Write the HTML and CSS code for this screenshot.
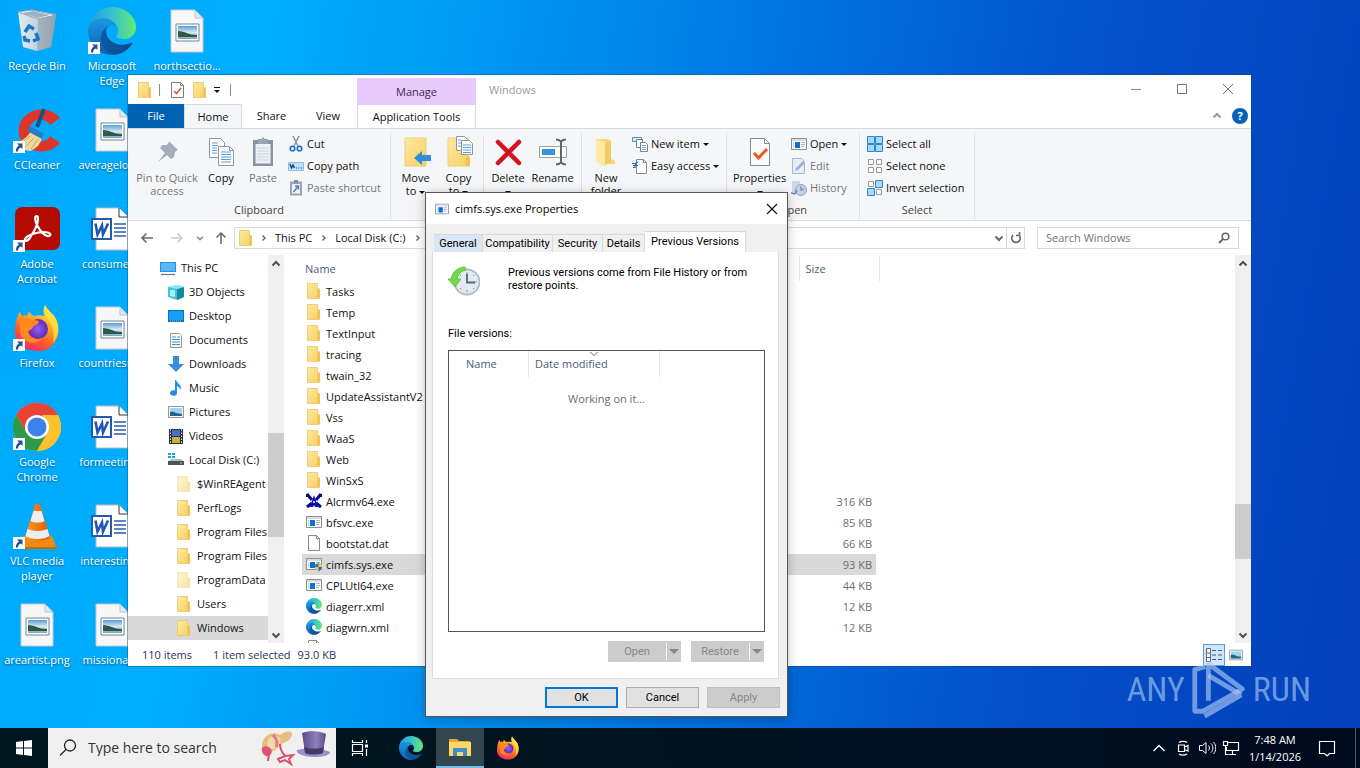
FILE: index.html
```html
<!DOCTYPE html>
<html lang="en">
<head>
<meta charset="utf-8">
<title>Windows</title>
<link rel="stylesheet" href="styles.css">
</head>
<body>
<svg class="defs" width="0" height="0" aria-hidden="true">
  <defs>
    <linearGradient id="gFolder" x1="0" x2="1" y1="0" y2="1"><stop offset="0" stop-color="#ffe9a0"/><stop offset="1" stop-color="#f8cf62"/></linearGradient>
    <linearGradient id="gEdgeA" x1="0" x2="1"><stop offset="0" stop-color="#0c59a4"/><stop offset="1" stop-color="#114a8b"/></linearGradient>
    <linearGradient id="gEdgeB" x1="0" x2="0" y1="0" y2="1"><stop offset="0" stop-color="#1b9de2"/><stop offset="1" stop-color="#0b5fb7"/></linearGradient>
    <linearGradient id="gEdgeC" x1="0" x2="1"><stop offset="0" stop-color="#1f9de0"/><stop offset=".5" stop-color="#35c1d0"/><stop offset="1" stop-color="#66eb6e"/></linearGradient>
    <linearGradient id="gFox" x1=".8" x2=".3" y1="0" y2="1"><stop offset="0" stop-color="#fff04a"/><stop offset=".4" stop-color="#ffa824"/><stop offset=".7" stop-color="#ff5a2c"/><stop offset="1" stop-color="#f02a6a"/></linearGradient>
    <radialGradient id="gFoxB"><stop offset="0" stop-color="#9a5cf0"/><stop offset="1" stop-color="#5a2bb8"/></radialGradient>
    <linearGradient id="gPhoto" x1="0" x2="0" y1="0" y2="1"><stop offset="0" stop-color="#5b9bd8"/><stop offset=".5" stop-color="#d9e8f2"/><stop offset="1" stop-color="#7da3b8"/></linearGradient>
    <linearGradient id="gBin" x1="0" x2="1"><stop offset="0" stop-color="#e4ebf0"/><stop offset=".5" stop-color="#c5d4de"/><stop offset="1" stop-color="#93a4b2"/></linearGradient>
    <linearGradient id="gHat" x1="0" x2="1"><stop offset="0" stop-color="#5a4b86"/><stop offset=".6" stop-color="#8f80bd"/><stop offset="1" stop-color="#5b4a86"/></linearGradient>
    <linearGradient id="gCone" x1="0" x2="1"><stop offset="0" stop-color="#ff9a20"/><stop offset="1" stop-color="#e05a00"/></linearGradient>
  </defs>
  <symbol id="folder" viewBox="0 0 16 16"><path d="M1.500.5h10v5l2 1v9h-12z" fill="url(#gFolder)" stroke="#e9c565" stroke-width=".8"/><path d="M11.500 6l2-1v9.500l-2 1z" fill="#f2bd48"/></symbol>
  <symbol id="folder-open" viewBox="0 0 32 32"><path d="M6 3h12l3 2v18l4 2v3H10l-4-4z" fill="#f8d675"/><path d="M6 3l9 3v25l-9-5z" fill="#ffe9a8"/><path d="M15 6l6-1v21l-6 3z" fill="#f4cb63"/></symbol>
  <symbol id="exe" viewBox="0 0 16 16"><path d="M.5 2.500h15v11H.5z" fill="#fff" stroke="#8b8f94"/><path d="M1 3h14v2H1z" fill="#d9dde2"/><path d="M4 6h5v6H4z" fill="#0f6fd0"/><path d="M10 6.500h4M10 8.500h4M10 10.500h3" stroke="#9fb6cb"/><path d="M2 6h1v6H2z" fill="#b9d6ef"/></symbol>
  <symbol id="shield-exe" viewBox="0 0 16 16"><use href="#exe"/><path d="M9 8.500l3.500-1.500L16 8.500c0 4-1 5.500-3.500 7C10 14 9 12.500 9 8.500z" fill="#2a72c8"/><path d="M12.500 7L16 8.500V11h-3.500zM12.500 11v4.500C10.500 14.500 9.500 13 9 11z" fill="#ffc43a"/></symbol>
  <symbol id="doc" viewBox="0 0 16 16"><path d="M2.500.5h8l3 3v12h-11z" fill="#fff" stroke="#8a8a8a"/><path d="M10.500.5v3h3" fill="none" stroke="#8a8a8a"/></symbol>
  <symbol id="doc-check" viewBox="0 0 16 16"><path d="M1.500.5h9l3 3v12h-12z" fill="#fff" stroke="#7d7d7d"/><path d="M10.500.5v3h3" fill="none" stroke="#7d7d7d"/><path d="M4 9l2.500 2.500L11 6" fill="none" stroke="#e2572b" stroke-width="1.600"/></symbol>
  <symbol id="prop" viewBox="0 0 32 32"><path d="M6.500 2.500h14l5 5v22h-19z" fill="#fbfbfb" stroke="#8a8a8a"/><path d="M20.500 2.500v5h5" fill="none" stroke="#8a8a8a"/><path d="M10 17l4.500 5L23 13" fill="none" stroke="#f05a1c" stroke-width="3"/></symbol>
  <symbol id="edge" viewBox="0 0 256 256"><g transform="translate(-4.600 -4.900)"><path fill="url(#gEdgeA)" d="M235.680 195.460a93.730 93.730 0 0 1-10.540 4.710 101.870 101.870 0 0 1-35.900 6.460c-47.320 0-88.540-32.550-88.540-74.320A31.480 31.480 0 0 1 117.130 105c-42.800 1.800-53.800 46.400-53.800 72.530 0 73.880 68.090 81.370 82.760 81.370 7.910 0 19.840-2.300 27-4.560l1.310-.44A128.340 128.340 0 0 0 241 201.100a4 4 0 0 0-5.320-5.640Z"/><path transform="translate(4.600 4.900)" fill="url(#gEdgeB)" d="M105.730 241.420A79.200 79.200 0 0 1 83 220.080a80.720 80.720 0 0 1 29.500-120.750c3.120-1.470 8.450-4.130 15.540-4a32.350 32.350 0 0 1 25.690 13 31.880 31.880 0 0 1 6.360 18.660c0-.21 24.460-79.600-80-79.600-43.900 0-80 41.660-80 78.210a130.150 130.150 0 0 0 12.110 56 128 128 0 0 0 156.380 67.110 75.550 75.550 0 0 1-62.780-8Z"/></g><path fill="url(#gEdgeC)" d="M152.330 148.860c-.81 1.050-3.300 2.500-3.300 5.660 0 2.610 1.700 5.120 4.720 7.230 14.380 10 41.490 8.680 41.560 8.680a59.560 59.560 0 0 0 30.270-8.350A61.380 61.380 0 0 0 256 109.100c.26-22.410-8-37.310-11.340-43.910C223.460 23.840 177.720 0 128 0A128 128 0 0 0 0 126.200c.48-36.540 36.800-66.050 80-66.050 3.500 0 23.460.34 42 10.070 16.340 8.580 24.900 18.940 30.850 29.210 6.180 10.670 7.280 24.150 7.280 29.520s-2.740 13.330-7.840 19.910Z"/></symbol>
  <symbol id="firefox" viewBox="0 0 48 48"><path d="M4 14c1-3 2-5 3-6l2 4c2-1 4-1 5 0l2-5c1 3 3 4 5 5 4-1 8-1 11 0-2-3-2-7 0-11 2 5 8 8 11 14 6 12 1 32-18 32C9 47 1 37 2 26c0-5 1-9 2-12z" fill="url(#gFox)"/><circle cx="25" cy="25" r="10" fill="url(#gFoxB)"/><path d="M8 13c6 0 8 2 11 3 3 0 6 0 7 2-1 3-5 3-6 5-1 3-4 3-5 5 1 6 8 9 14 6-6 9-21 5-22-7 0-5 0-9 1-14z" fill="#ff8a1e"/><path d="M32 1c2 5 8 8 11 14 4 9 2 18-3 24 2-9 0-17-5-23-4-5-5-10-3-15z" fill="#ffe23e" opacity=".8"/></symbol>
  <symbol id="chrome" viewBox="0 0 48 48"><circle cx="24" cy="24" r="24" fill="#fcc934"/><path d="M24 24L3.200 12A24 24 0 0 1 44.800 12z" fill="#ea4335"/><path d="M24 12h20.800A24 24 0 0 0 3.200 12L13.600 30z" fill="#ea4335"/><path d="M3.200 12A24 24 0 0 0 24 48l10.400-18L24 32 13.600 30z" fill="#2b9b4a"/><path d="M44.800 12A24 24 0 0 1 24 48l10.400-18L35 20l-6-8z" fill="#fcc22d"/><circle cx="24" cy="24" r="12" fill="#fff"/><circle cx="24" cy="24" r="9.500" fill="#3b82ec"/></symbol>
  <symbol id="acrobat" viewBox="0 0 48 48"><rect x="2" y="2" width="45" height="43" rx="7" fill="#b30b00"/><path d="M24 11c-3 0-2 5 0 9 3 6 8 12 12 11 3-1 1-4-5-4-7 0-17 3-19 7-1 3 3 3 6-3 4-6 7-13 7-17 0-2 0-3-1-3z" fill="none" stroke="#fff" stroke-width="2.200"/></symbol>
  <symbol id="vlc" viewBox="0 0 48 48"><path d="M10 34h29l5 13H4z" fill="#f08a12"/><path d="M4 45h40v2H4z" fill="#c96a04"/><path d="M22 3c1-2 4-2 5 0l10 32c-4 5-21 5-25 0z" fill="url(#gCone)"/><path d="M20.500 9h8l3 10c-4 2-10 2-14 0zM14.500 27c6 2.500 14 2.500 20 0l2 7c-5 4-19 4-24 0z" fill="#eceff1"/></symbol>
  <symbol id="ccleaner" viewBox="0 0 48 48"><path d="M47 12A23 21 0 1 0 47 37L37 30a11 11 0 1 1 0-11z" fill="#de3528"/><path d="M2 37c10-3 14-8 17-14l11 6c-2 8-5 13-13 16C9 44 6 41 2 37z" fill="#f3d79a"/><path d="M7 38l10-8M12 41l9-9M18 43l7-10" stroke="#cfa65f"/><path d="M17 20l14 8-2 5-15-8z" fill="#2b7cc4"/><path d="M24 21L31 3" stroke="#1b4f90" stroke-width="4"/></symbol>
  <symbol id="bin" viewBox="0 0 48 48"><path d="M5 5l14-2 24 4 0 2-5 31-14 4-14-4z" fill="url(#gBin)"/><path d="M5 5l14-2 24 5-18 4z" fill="#f4f8fb" stroke="#8ea3b2"/><path d="M9 6l11-2 17 4-12 3z" fill="#9db2bf"/><path d="M25 12l18-4-5 32-14 4z" fill="#8fa1ae" opacity=".6"/><g fill="none" stroke="#1976c8" stroke-width="3.500"><path d="M12 25l4-6 5 3M23 26l2 6-5 2M17 34l-5-1-1-4"/></g></symbol>
  <symbol id="png" viewBox="0 0 48 48"><path d="M8 3h24l8 8v34H8z" fill="#f7f7f7" stroke="#c5c9cc"/><path d="M32 3v8h8z" fill="#dceaf3" stroke="#b9c5cd"/><path d="M13 17h23v17H13z" fill="#fff" stroke="#6f8798"/><path d="M15 19h19v13H15z" fill="url(#gPhoto)"/><path d="M15 24c7 0 10 4 19 4v2H15z" fill="#2d5a48"/></symbol>
  <symbol id="word" viewBox="0 0 48 48"><path d="M8 3h23l9 9v33H8z" fill="#fff" stroke="#b8b8b8"/><path d="M31 3v9h9" fill="#fff" stroke="#333"/><path d="M26 19h12M26 23h12M26 27h12M26 31h12" stroke="#2b5dab" stroke-width="1.500"/><path d="M3 13h21v22H3z" fill="#2459b0"/><path d="M5 15h17v18H5z" fill="#fff"/><path d="M7.500 18.500l2 11 4.500-9 1 9 5-11" fill="none" stroke="#1f57b4" stroke-width="2.600"/></symbol>
  <symbol id="link" viewBox="0 0 12 12"><path d="M0 0h12v12H0z" fill="#fff"/><path d="M4 2.500h5.500V8L8 6.500C6 7 5 8.500 5 10.500H3C2.500 8 4 5.500 6 4.500z" fill="#254f8f"/></symbol>
  <symbol id="pin" viewBox="0 0 32 32"><path d="M18 5l9 9-2 1-1 1-1 5-3 2-4-4-9 7 7-9-5-5 2-3 5 0 2-3z" fill="#a3adba"/></symbol>
  <symbol id="copy" viewBox="0 0 32 32"><g fill="#fff" stroke="#8e979f"><path d="M4.500 2.500h11l4 4v15h-15z"/><path d="M13.500 10.500h11l4 4v15h-15z"/><path d="M24.500 10.500v4h4" fill="none"/></g><path d="M7 7h6M7 9.500h6M7 12h5M7 14.500h5M7 17h5M16 16h10M16 18.500h10M16 21h10M16 23.500h10M16 26h10" stroke="#5a9ce0"/></symbol>
  <symbol id="paste" viewBox="0 0 32 32"><path d="M6 4h20v26H6z" fill="#8893a3"/><path d="M8.500 8h15v19.500h-15z" fill="#eef1f5"/><path d="M11 3h3l2-2 2 2h3v5H11z" fill="#9aa5b4"/><path d="M10 12h12M10 15h12M10 18h12M10 21h12M10 24h12" stroke="#cdd4de"/></symbol>
  <symbol id="cut" viewBox="0 0 16 16"><path d="M5 0l5 10M11 0L6 10" stroke="#8796a5" stroke-width="1.500" fill="none"/><circle cx="4.500" cy="12.500" r="2.300" fill="none" stroke="#1b70bd" stroke-width="1.600"/><circle cx="11.500" cy="12.500" r="2.300" fill="none" stroke="#1b70bd" stroke-width="1.600"/></symbol>
  <symbol id="path" viewBox="0 0 16 16"><path d="M.5 4.500h15v8H.5z" fill="#bfe0fb" stroke="#8fbfe6"/><path d="M2 6l1.500 4L5 7l1.500 3" fill="none" stroke="#123a6b" stroke-width="1.300"/><path d="M8 10h1M10.500 10h1M13 10h1" stroke="#123a6b"/></symbol>
  <symbol id="pastelink" viewBox="0 0 16 16"><path d="M2 1.500h12v14H2z" fill="#98a6b9"/><path d="M4 4h8v9.500H4z" fill="#eef2f7"/><path d="M6 0h4v3H6z" fill="#7f8fa6"/><path d="M5.500 12l4-5M7 6h3.500v3.500" fill="none" stroke="#5b7fb8" stroke-width="1.500"/></symbol>
  <symbol id="move" viewBox="0 0 32 32"><path d="M5 2h21v28H5z" fill="url(#gFolder)" stroke="#efd078"/><path d="M14 22l8-7v4h9v6h-9v4z" fill="#2f8fdc"/></symbol>
  <symbol id="copyto" viewBox="0 0 32 32"><path d="M5 2h21v28H5z" fill="url(#gFolder)" stroke="#efd078"/><path d="M23 21h4v9h-4z" fill="#f0c254"/><g fill="#fff" stroke="#8e979f"><path d="M13.500.5h8l3 3v11h-11z"/><path d="M18.500 4.500h8l3 3v11h-11z"/></g><path d="M20 9h8M20 11.500h8M20 14h8M20 16.500h8M15 4h3M15 7h3M15 10h3" stroke="#5a9ce0"/></symbol>
  <symbol id="delete" viewBox="0 0 32 32"><path d="M6 6l21 21M27 6L6 27" stroke="#d31121" stroke-width="4.500" stroke-linecap="round"/></symbol>
  <symbol id="rename" viewBox="0 0 32 32"><path d="M2.500 10.500h27v11h-27z" fill="#fff" stroke="#9aa3ac"/><path d="M5 13h13v6H5z" fill="#3a93dd"/><path d="M19 3.500c3 0 4 1 5 2 1-1 2-2 5-2M19 28.500c3 0 4-1 5-2 1 1 2 2 5 2M24 5v22" fill="none" stroke="#616970" stroke-width="2"/></symbol>
  <symbol id="newitem" viewBox="0 0 16 16"><path d="M.5 1.500h9v4h-9z" fill="#d5ebfb" stroke="#5a93bd"/><path d="M4.500 3.500h6v8h-6z" fill="#fff" stroke="#77828c"/><path d="M8.500 6.500h5l2 2v7h-7z" fill="#fff" stroke="#77828c"/><path d="M10 9.500h4M10 11.500h4M10 13.500h4" stroke="#7ca8cf"/></symbol>
  <symbol id="easy" viewBox="0 0 16 16"><path d="M4.500 1.500h7l3 3v11h-10z" fill="#fff" stroke="#8a8a8a"/><path d="M11.500 1.500v3h3" fill="none" stroke="#8a8a8a"/><path d="M0 5.500h5M1 7.500h5M1 9.500h2M3 10c0-3 0-5 3-6" stroke="#1c6fc0" fill="none" stroke-width="1.200"/></symbol>
  <symbol id="edit" viewBox="0 0 16 16"><path d="M1.500.5h9l3 3v12h-12z" fill="#e9eef6" stroke="#a9b7cc"/><path d="M4 13l1-3 7-7 2 2-7 7z" fill="#9db2d2"/></symbol>
  <symbol id="history" viewBox="0 0 16 16"><path d="M1 1h8v12H1z" fill="#ccd8ea"/><circle cx="10" cy="10" r="5.500" fill="#c3d0e6" stroke="#8ea3c6"/><path d="M10 6.500V10l3-1M0 13l4 1 2-4" fill="none" stroke="#6f87b3" stroke-width="1.300"/></symbol>
  <symbol id="selall" viewBox="0 0 16 16"><path d="M.5.5h7v7h-7zM8.500.5h7v7h-7zM.5 8.500h7v7h-7zM8.500 8.500h7v7h-7z" fill="#a5daf9" stroke="#2a86d0"/></symbol>
  <symbol id="selnone" viewBox="0 0 16 16"><path d="M1.500 1.500h5v5h-5zM9.500 1.500h5v5h-5zM1.500 9.500h5v5h-5zM9.500 9.500h5v5h-5z" fill="#fff" stroke="#9a9a9a"/></symbol>
  <symbol id="selinv" viewBox="0 0 16 16"><path d="M1.500 1.500h5v5h-5zM9.500 9.500h5v5h-5z" fill="#fff" stroke="#9a9a9a"/><path d="M8.500.5h7v7h-7zM.5 8.500h7v7h-7z" fill="#a5daf9" stroke="#2a86d0"/></symbol>
  <symbol id="pc" viewBox="0 0 16 16"><path d="M0 2h16v10H0z" fill="#1e96e6"/><path d="M1 3h14v8H1z" fill="#57b8f5"/><path d="M1 14.500h14" stroke="#5f8297" stroke-width="1.200"/></symbol>
  <symbol id="cube" viewBox="0 0 16 16"><path d="M0 3l9-2 7 2v10l-7 3-9-3z" fill="#3cc7d6"/><path d="M9 5l7-2v10l-7 3z" fill="#16899d"/><path d="M0 3l9-2 7 2-7 2z" fill="#8be8ee"/><path d="M2 6h5v7l-5-1z" fill="#a8f0f3"/></symbol>
  <symbol id="desk" viewBox="0 0 16 16"><path d="M0 2h16v12H0z" fill="#0c6fc4"/><path d="M1 3h14v9H1z" fill="#16a0f8"/><path d="M2 13h12" stroke="#8bd0ff" stroke-dasharray="1 1"/></symbol>
  <symbol id="docs" viewBox="0 0 16 16"><path d="M2.500 1.500h9l2 2v12h-11z" fill="#fff" stroke="#8d9aa5"/><path d="M4 5h4M4 7.500h8M4 10h8M4 12.500h8M9 5h3" stroke="#3f8fd0" stroke-width="1.200"/></symbol>
  <symbol id="down" viewBox="0 0 16 16"><path d="M5 0h6v8h5l-8 8-8-8h5z" fill="#3b8fda"/></symbol>
  <symbol id="music" viewBox="0 0 16 16"><path d="M8 0c1 4 7 5 4 10-.5-3-2-4-3-4v7a3.500 2.800 0 1 1-2-2.500V0z" fill="#1e90e8"/></symbol>
  <symbol id="pics" viewBox="0 0 16 16"><path d="M.5 2.500h15v11H.5z" fill="#fff" stroke="#8a99a5"/><path d="M2 4h12v8H2z" fill="#9fd2f5"/><path d="M2 8c4-1 6 2 12 2v2H2z" fill="#2a5f86"/></symbol>
  <symbol id="video" viewBox="0 0 16 16"><path d="M1 1h14v15H1z" fill="#2b2f3a"/><path d="M4 2h8v6H4z" fill="#456fd0"/><path d="M4 9h8v6H4z" fill="#cbb042"/><path d="M2.500 1.500v14M13.500 1.500v14" stroke="#dfe3ea" stroke-dasharray="1.500 1.500"/></symbol>
  <symbol id="disk" viewBox="0 0 16 16"><path d="M1 9l2-2h10l2 2z" fill="#b4babf"/><path d="M0 9h16v4H0z" fill="#4b5359"/><path d="M12 11h2" stroke="#7cf08a"/><path d="M0 1h3v2H0zM4 1h3v2H4zM0 4h3v2H0zM4 4h3v2H4z" fill="#12a5e8"/></symbol>
  <symbol id="alc" viewBox="0 0 16 16"><path d="M1 1l5 6M15 1l-5 6M1 14l5-4M15 14l-5-4M1 1v3M15 1v3" stroke="#0a0a8c" stroke-width="3"/><path d="M8 2l4 12H9l-1-2-1 2H4z" fill="#0a0ac0"/><circle cx="8" cy="9" r="1" fill="#fff"/></symbol>
  <symbol id="chev-up" viewBox="0 0 10 10"><path d="M1.500 6.500L5 3l3.500 3.500" fill="none" stroke="currentColor" stroke-width="2"/></symbol>
  <symbol id="chev-down" viewBox="0 0 10 10"><path d="M1.500 3.500L5 7l3.500-3.500" fill="none" stroke="currentColor" stroke-width="2"/></symbol>
  <symbol id="chev-right" viewBox="0 0 10 10"><path d="M3.500 2.500L6 5 3.500 7.500" fill="none" stroke="currentColor" stroke-width="1.400"/></symbol>
  <symbol id="loupe" viewBox="0 0 12 12"><circle cx="7.500" cy="4.500" r="3.300" fill="none" stroke="currentColor" stroke-width="1.500"/><path d="M5 7L1 11" stroke="currentColor" stroke-width="2"/></symbol>
</svg>

<main class="desktop">
  <div class="icons">
    <a class="shortcut" href="#"><span class="pic"><svg class="i48"><use href="#bin"/></svg></span>Recycle Bin</a>
    <a class="shortcut" href="#"><span class="pic"><svg class="i48"><use href="#ccleaner"/></svg><svg class="badge"><use href="#link"/></svg></span>CCleaner</a>
    <a class="shortcut" href="#"><span class="pic"><svg class="i48"><use href="#acrobat"/></svg><svg class="badge"><use href="#link"/></svg></span>Adobe<br>Acrobat</a>
    <a class="shortcut" href="#"><span class="pic"><svg class="i48"><use href="#firefox"/></svg><svg class="badge"><use href="#link"/></svg></span>Firefox</a>
    <a class="shortcut" href="#"><span class="pic"><svg class="i48"><use href="#chrome"/></svg><svg class="badge"><use href="#link"/></svg></span>Google<br>Chrome</a>
    <a class="shortcut" href="#"><span class="pic"><svg class="i48"><use href="#vlc"/></svg><svg class="badge"><use href="#link"/></svg></span>VLC media<br>player</a>
    <a class="shortcut" href="#"><span class="pic"><svg class="i48"><use href="#png"/></svg></span>areartist.png</a>
    <a class="shortcut" href="#"><span class="pic"><svg class="i48"><use href="#edge"/></svg><svg class="badge"><use href="#link"/></svg></span>Microsoft<br>Edge</a>
    <a class="shortcut" href="#"><span class="pic"><svg class="i48"><use href="#png"/></svg></span>averagelow...</a>
    <a class="shortcut" href="#"><span class="pic"><svg class="i48"><use href="#word"/></svg></span>consumer...</a>
    <a class="shortcut" href="#"><span class="pic"><svg class="i48"><use href="#png"/></svg></span>countriesm...</a>
    <a class="shortcut" href="#"><span class="pic"><svg class="i48"><use href="#word"/></svg></span>formeeting...</a>
    <a class="shortcut" href="#"><span class="pic"><svg class="i48"><use href="#word"/></svg></span>interesting...</a>
    <a class="shortcut" href="#"><span class="pic"><svg class="i48"><use href="#png"/></svg></span>missionar...</a>
    <a class="shortcut" href="#"><span class="pic"><svg class="i48"><use href="#png"/></svg></span>northsectio...</a>
  </div>

  <section class="explorer" aria-label="Windows">
    <header class="head">
      <div class="head-left">
        <div class="quick">
          <svg class="i16"><use href="#folder"/></svg><i class="bar"></i>
          <button class="first" aria-label="Properties"><svg class="i16"><use href="#doc-check"/></svg></button>
          <button aria-label="New folder"><svg class="i16"><use href="#folder"/></svg></button>
          <button class="qat-more" aria-label="Customize"><i class="caret"></i></button><i class="bar"></i>
        </div>
        <div class="tabs">
          <button class="tab file">File</button><button class="tab home">Home</button><button class="tab share">Share</button><button class="tab view">View</button>
        </div>
      </div>
      <div class="manage"><span>Manage</span><button>Application Tools</button></div>
      <h1>Windows</h1>
      <div class="head-right">
        <div class="winctl">
          <button aria-label="Minimize"><svg class="i12" viewBox="0 0 12 12"><path d="M1 6.500h10" stroke="#888"/></svg></button>
          <button aria-label="Maximize"><svg class="i12" viewBox="0 0 12 12"><path d="M1.500 1.500h9v9h-9z" fill="none" stroke="#777"/></svg></button>
          <button aria-label="Close"><svg class="i12" viewBox="0 0 12 12"><path d="M1 1l10 10M11 1L1 11" stroke="#777"/></svg></button>
        </div>
        <div class="help">
          <button aria-label="Collapse ribbon"><svg class="i10"><use href="#chev-up"/></svg></button>
          <button class="q" aria-label="Help">?</button>
        </div>
      </div>
    </header>

    <div class="ribbon">
      <div class="group clip">
        <div class="items">
          <button class="big pinb off"><svg class="i32"><use href="#pin"/></svg>Pin to Quick<br>access</button>
          <button class="big copyb"><svg class="i32"><use href="#copy"/></svg>Copy</button>
          <button class="big pasteb off"><svg class="i32"><use href="#paste"/></svg>Paste</button>
          <div class="smalls">
            <button><svg class="i16"><use href="#cut"/></svg>Cut</button>
            <button><svg class="i16"><use href="#path"/></svg>Copy path</button>
            <button class="off"><svg class="i16"><use href="#pastelink"/></svg>Paste shortcut</button>
          </div>
        </div>
        <div class="gname">Clipboard</div>
      </div>
      <div class="group org">
        <div class="items">
          <button class="big moveb"><svg class="i32"><use href="#move"/></svg>Move<br>to <i class="caret"></i></button>
          <button class="big moveb"><svg class="i32"><use href="#copyto"/></svg>Copy<br>to <i class="caret"></i></button>
          <i class="vline"></i>
          <button class="big delb"><svg class="i32"><use href="#delete"/></svg>Delete<br><i class="caret"></i></button>
          <button class="big renb"><svg class="i32"><use href="#rename"/></svg>Rename</button>
        </div>
        <div class="gname">Organize</div>
      </div>
      <div class="group new">
        <div class="items">
          <button class="big newb"><svg class="i32"><use href="#folder-open"/></svg>New<br>folder</button>
          <div class="smalls">
            <button><svg class="i16"><use href="#newitem"/></svg>New item <i class="caret"></i></button>
            <button><svg class="i16"><use href="#easy"/></svg>Easy access <i class="caret"></i></button>
          </div>
        </div>
        <div class="gname">New</div>
      </div>
      <div class="group open">
        <div class="items">
          <button class="big propb"><svg class="i32"><use href="#prop"/></svg>Properties<br><i class="caret"></i></button>
          <div class="smalls">
            <button><svg class="i16"><use href="#exe"/></svg>Open <i class="caret"></i></button>
            <button class="off"><svg class="i16"><use href="#edit"/></svg>Edit</button>
            <button class="off"><svg class="i16"><use href="#history"/></svg>History</button>
          </div>
        </div>
        <div class="gname">Open</div>
      </div>
      <div class="group sel">
        <div class="items">
          <div class="smalls">
            <button><svg class="i16"><use href="#selall"/></svg>Select all</button>
            <button><svg class="i16"><use href="#selnone"/></svg>Select none</button>
            <button><svg class="i16"><use href="#selinv"/></svg>Invert selection</button>
          </div>
        </div>
        <div class="gname">Select</div>
      </div>
    </div>

    <div class="addressrow">
      <div class="arrows">
        <button aria-label="Back"><svg class="i14" viewBox="0 0 14 14"><path d="M13 7H2M6.500 2.500L2 7l4.500 4.500" fill="none" stroke="#666" stroke-width="1.500"/></svg></button>
        <button aria-label="Forward"><svg class="i14" viewBox="0 0 14 14"><path d="M1 7h11M7.500 2.500L12 7l-4.500 4.500" fill="none" stroke="#ccc" stroke-width="1.500"/></svg></button>
        <button class="recent" aria-label="Recent"><svg class="i8"><use href="#chev-down"/></svg></button>
        <button class="up" aria-label="Up"><svg class="i14" viewBox="0 0 14 14"><path d="M7 13V2M2.500 6.500L7 2l4.500 4.500" fill="none" stroke="#666" stroke-width="1.500"/></svg></button>
      </div>
      <nav class="address" aria-label="Address">
        <svg class="i16"><use href="#folder"/></svg>
        <svg class="i10"><use href="#chev-right"/></svg><a href="#">This PC</a>
        <svg class="i10"><use href="#chev-right"/></svg><a href="#">Local Disk (C:)</a>
        <svg class="i10"><use href="#chev-right"/></svg>
        <span class="grow"></span>
        <button class="prev" aria-label="Previous locations"><svg class="i10"><use href="#chev-down"/></svg></button>
        <button class="refresh" aria-label="Refresh"><svg class="i12" viewBox="0 0 12 12"><path d="M3 3a4.300 4.300 0 1 0 6 0M9.500 0v3.500H6" fill="none" stroke="#666" stroke-width="1.600"/></svg></button>
      </nav>
      <div class="search"><input type="search" aria-label="Search Windows" placeholder="Search Windows"><svg class="i12"><use href="#loupe"/></svg></div>
    </div>

    <div class="panes">
      <nav class="tree" aria-label="Folders">
        <a href="#"><svg class="i16"><use href="#pc"/></svg>This PC</a>
        <a href="#" class="l1"><svg class="i16"><use href="#cube"/></svg>3D Objects</a>
        <a href="#" class="l1"><svg class="i16"><use href="#desk"/></svg>Desktop</a>
        <a href="#" class="l1"><svg class="i16"><use href="#docs"/></svg>Documents</a>
        <a href="#" class="l1"><svg class="i16"><use href="#down"/></svg>Downloads</a>
        <a href="#" class="l1"><svg class="i16"><use href="#music"/></svg>Music</a>
        <a href="#" class="l1"><svg class="i16"><use href="#pics"/></svg>Pictures</a>
        <a href="#" class="l1"><svg class="i16"><use href="#video"/></svg>Videos</a>
        <a href="#" class="l1"><svg class="i16"><use href="#disk"/></svg>Local Disk (C:)</a>
        <a href="#" class="l2 hid"><svg class="i16"><use href="#folder"/></svg>$WinREAgent</a>
        <a href="#" class="l2"><svg class="i16"><use href="#folder"/></svg>PerfLogs</a>
        <a href="#" class="l2"><svg class="i16"><use href="#folder"/></svg>Program Files</a>
        <a href="#" class="l2"><svg class="i16"><use href="#folder"/></svg>Program Files</a>
        <a href="#" class="l2 hid"><svg class="i16"><use href="#folder"/></svg>ProgramData</a>
        <a href="#" class="l2"><svg class="i16"><use href="#folder"/></svg>Users</a>
        <a href="#" class="l2 cur"><svg class="i16"><use href="#folder"/></svg>Windows</a>
      </nav>
      <div class="scroll nav-scroll"><button aria-label="Scroll up"><svg class="i10"><use href="#chev-up"/></svg></button><i class="before"></i><i class="thumb"></i><i class="after"></i><button aria-label="Scroll down"><svg class="i10"><use href="#chev-down"/></svg></button></div>
      <div class="files">
        <table>
          <thead><tr><th>Name</th><th class="size">Size</th></tr></thead>
          <tbody>
            <tr><td><svg class="i16"><use href="#folder"/></svg>Tasks</td><td></td></tr>
            <tr><td><svg class="i16"><use href="#folder"/></svg>Temp</td><td></td></tr>
            <tr><td><svg class="i16"><use href="#folder"/></svg>TextInput</td><td></td></tr>
            <tr><td><svg class="i16"><use href="#folder"/></svg>tracing</td><td></td></tr>
            <tr><td><svg class="i16"><use href="#folder"/></svg>twain_32</td><td></td></tr>
            <tr><td><svg class="i16"><use href="#folder"/></svg>UpdateAssistantV2</td><td></td></tr>
            <tr><td><svg class="i16"><use href="#folder"/></svg>Vss</td><td></td></tr>
            <tr><td><svg class="i16"><use href="#folder"/></svg>WaaS</td><td></td></tr>
            <tr><td><svg class="i16"><use href="#folder"/></svg>Web</td><td></td></tr>
            <tr><td><svg class="i16"><use href="#folder"/></svg>WinSxS</td><td></td></tr>
            <tr><td><svg class="i16"><use href="#alc"/></svg>Alcrmv64.exe</td><td>316 KB</td></tr>
            <tr><td><svg class="i16"><use href="#exe"/></svg>bfsvc.exe</td><td>85 KB</td></tr>
            <tr><td><svg class="i16"><use href="#doc"/></svg>bootstat.dat</td><td>66 KB</td></tr>
            <tr class="cur"><td><svg class="i16"><use href="#shield-exe"/></svg>cimfs.sys.exe</td><td>93 KB</td></tr>
            <tr><td><svg class="i16"><use href="#exe"/></svg>CPLUtl64.exe</td><td>44 KB</td></tr>
            <tr><td><svg class="i16"><use href="#edge"/></svg>diagerr.xml</td><td>12 KB</td></tr>
            <tr><td><svg class="i16"><use href="#edge"/></svg>diagwrn.xml</td><td>12 KB</td></tr>
            <tr><td><svg class="i16"><use href="#doc"/></svg></td><td></td></tr>
          </tbody>
        </table>
      </div>
      <div class="scroll file-scroll"><button aria-label="Scroll up"><svg class="i10"><use href="#chev-up"/></svg></button><i class="before"></i><i class="thumb"></i><i class="after"></i><button aria-label="Scroll down"><svg class="i10"><use href="#chev-down"/></svg></button></div>
    </div>

    <footer class="status">
      <span class="count">110 items</span><span>1 item selected</span><span class="kb">93.0 KB</span><span class="grow"></span>
      <button class="mode on" aria-label="Details view"><svg class="i16" viewBox="0 0 16 16"><path d="M.5 1.500h4v13h-4zM.5 6h4M.5 10.500h4" fill="#fff" stroke="#667"/><path d="M6 3.500h4M6 8h4M6 12.500h4M12 3.500h4M12 8h4M12 12.500h4" stroke="#557"/></svg></button>
      <button class="mode" aria-label="Large icons"><svg class="i14"><use href="#pics"/></svg></button>
    </footer>
  </section>

  <section class="dialog" role="dialog" aria-label="cimfs.sys.exe Properties">
    <header><svg class="i14"><use href="#exe"/></svg><h2>cimfs.sys.exe Properties</h2><button aria-label="Close"><svg class="i12" viewBox="0 0 12 12"><path d="M1 1l10 10M11 1L1 11" stroke="#111" stroke-width="1.200"/></svg></button></header>
    <div class="ptabs" role="tablist">
      <button role="tab" class="hot t-gen">General</button><button role="tab" class="t-com">Compatibility</button><button role="tab" class="t-sec">Security</button><button role="tab" class="t-det">Details</button><button role="tab" class="active">Previous Versions</button>
    </div>
    <div class="page">
      <div class="intro">
        <svg class="clock" viewBox="0 0 32 32"><circle cx="19" cy="16" r="12.500" fill="#e3ebf1" stroke="#b4bec5" stroke-width="2"/><path d="M19 6v2M19 24v2M9 16h2M27 16h2M12 9l1 1M26 9l-1 1M12 23l1-1M26 23l-1-1" stroke="#7f8d98"/><path d="M19 8v8.500h8" fill="none" stroke="#51677a" stroke-width="1.800"/><path d="M17 1C10 1 4 6 3 13H0l7 8 6-8H9c1-5 4-8 9-9z" fill="#6fd94b" stroke="#4fb934" stroke-width=".7"/></svg>
        <p>Previous versions come from File History or from<br>restore points.</p>
      </div>
      <div class="flabel">File versions:</div>
      <div class="versions">
        <div class="vhead"><span class="c1">Name</span><span class="c2">Date modified<svg class="sort" viewBox="0 0 8 4"><path d="M0 0l4 3.500L8 0" fill="none" stroke="#777"/></svg></span></div>
        <p>Working on it...</p>
      </div>
      <div class="vactions">
        <button class="split" disabled><span>Open</span><i class="caret"></i></button>
        <button class="split" disabled><span>Restore</span><i class="caret"></i></button>
      </div>
    </div>
    <footer><button class="ok">OK</button><button>Cancel</button><button disabled>Apply</button></footer>
  </section>

  <div class="watermark"><span>ANY</span>
    <svg viewBox="0 0 56 64"><g fill="none" stroke="currentColor" stroke-width="5" stroke-linejoin="round"><path d="M14 9L3 12v43l8 0 41-23L17 6v38"/><path d="M17 18l34 20M13 60l38-22"/></g></svg>
    <span>RUN</span></div>
</main>

<footer class="taskbar">
  <button class="start" aria-label="Start"><svg class="i16" viewBox="0 0 16 16"><path d="M0 2l7-1v6.500H0zM8 1l8-1v7.500H8zM0 8.500h7V15l-7-1zM8 8.500h8V16l-8-1z" fill="#fff"/></svg></button>
  <div class="tsearch">
    <svg class="i18" viewBox="0 0 18 18"><circle cx="11" cy="6.500" r="5.500" fill="none" stroke="#222" stroke-width="1.300"/><path d="M7 10.500L1 16.500" stroke="#222" stroke-width="1.300"/></svg>
    <input type="text" aria-label="Type here to search" placeholder="Type here to search">
    <svg class="hats" viewBox="0 0 72 36"><path d="M2 17C1 7 12 0 20 5c4-4 13-5 12 0-1 6-8 7-12 10-3 4-7 7-12 8-4-1-6-3-6-6z" fill="#e8bd80"/><path d="M7 14C8 6 16 4 20 8c2 6-4 12-11 12z" fill="#f6d9a4"/><path d="M13 5c4 4 5 8 3 12" fill="none" stroke="#e2798a" stroke-width="3"/><path d="M2 18c3-3 7-2 9 1s0 6-3 7-7-3-6-8z" fill="#dd5570"/><path d="M9 24l-1 7M20 14c0 6 2 9 6 13M18 29l7-3 8-1-4 4 2 5-6-4-5 2z" fill="none" stroke="#d8506c" stroke-width="2"/><path d="M37 20c6-2 26-2 33 2 1 3-8 5-16 5s-19-3-17-7z" fill="#9a90cc"/><path d="M42 3c6-3 20-2 24 1l-3 18c-4 2-15 2-18 0z" fill="url(#gHat)"/><path d="M44 17c5 2 15 2 20 0l-1 6c-4 2-15 2-18 0z" fill="#443a66"/></svg>
  </div>
  <button class="app" aria-label="Task View"><svg class="i18" viewBox="0 0 18 18"><path d="M1.500 1v2.500h10V1M1.500 17v-2.500h10V17M1.500 5.500h10v7h-10zM15.500 1v3M15.500 10v7" fill="none" stroke="#fff" stroke-width="1.200"/><path d="M14 5.500h3v3h-3z" fill="#fff"/></svg></button>
  <button class="app wide" aria-label="Edge"><svg class="i24"><use href="#edge"/></svg></button>
  <button class="app active" aria-label="File Explorer"><svg class="i24" viewBox="0 0 24 24"><path d="M1 4h8l2 2h11v6H1z" fill="#e8a33d"/><path d="M1 7h22v14H1z" fill="#ffd766"/><path d="M5 21v-8h14v8h-4v-4H9v4z" fill="#3d8fc6"/></svg></button>
  <button class="app" aria-label="Firefox"><svg class="i24"><use href="#firefox"/></svg></button>
  <span class="grow"></span>
  <div class="tray">
    <button aria-label="Hidden icons"><svg class="i14" viewBox="0 0 14 14"><path d="M1.500 10L7 4.500l5.500 5.500" fill="none" stroke="#fff" stroke-width="1.400"/></svg></button>
    <button aria-label="Meet Now"><svg class="i16" viewBox="0 0 16 16"><path d="M3.500 5h6v6.500h-6zM9.500 7l3.500-1.500v5.500l-3.500-1.500M4 2.500c2-1.500 6-1.500 8 0M4 14c2 1.500 6 1.500 8 0" fill="none" stroke="#fff" stroke-width="1.200"/></svg></button>
    <button aria-label="Volume"><svg class="i18" viewBox="0 0 18 18"><path d="M1.500 6.500h3L8 3.500v11L4.500 11.500h-3zM10.500 6.500c1.300 1.500 1.300 3.500 0 5M13 4.500c2.500 2.500 2.500 6.500 0 9M15.500 3c3 3.500 3 8.500 0 12" fill="none" stroke="#fff"/></svg></button>
    <button aria-label="Network"><svg class="i18" viewBox="0 0 18 18"><path d="M6 3.500h10.500v8H4.500V8M10.500 12v3M7 15.500h7M1.500 2.500h4v4h-4zM3.500 6.500v9h3" fill="none" stroke="#fff" stroke-width="1.200"/></svg></button>
  </div>
  <button class="time">7:48 AM<br>1/14/2026</button>
  <button class="notify" aria-label="Notifications"><svg class="i18" viewBox="0 0 18 18"><path d="M1.500 2.500h15v12h-5L9 17l-2.500-2.500h-5z" fill="none" stroke="#fff" stroke-width="1.200"/></svg></button>
  <button class="peek" aria-label="Show desktop"></button>
</footer>
</body>
</html>
```
FILE: styles.css
```css
* { box-sizing: border-box; }
html, body { height: 100%; }
body {
  margin: 0;
  display: flex;
  flex-direction: column;
  overflow: hidden;
  font: 11px/16px "Open Sans", "Noto Sans", sans-serif;
  color: #111;
}
button {
  font: inherit;
  color: inherit;
  background: none;
  border: 0;
  padding: 0;
  margin: 0;
  display: flex;
  align-items: center;
  justify-content: center;
  white-space: nowrap;
}
a { color: inherit; text-decoration: none; }
h1, h2, p { margin: 0; font-size: inherit; font-weight: normal; }
svg { flex: none; display: block; }
input { font: inherit; border: 0; background: none; outline: 0; padding: 0; min-width: 0; }
.defs { position: absolute; }
.grow { flex: 1; }
.i8 { width: 8px; height: 8px; }
.i10 { width: 10px; height: 10px; }
.i12 { width: 12px; height: 12px; }
.i14 { width: 14px; height: 14px; }
.i16 { width: 16px; height: 16px; }
.i18 { width: 18px; height: 18px; }
.i24 { width: 24px; height: 24px; }
.i32 { width: 32px; height: 32px; }
.i48 { width: 48px; height: 48px; }
.caret {
  display: inline-block;
  border: 3px solid transparent;
  border-top-color: currentColor;
  border-bottom: 0;
  vertical-align: middle;
}

/* Desktop */
.desktop {
  position: relative;
  flex: 1;
  min-height: 0;
  background: linear-gradient(100deg, #00a8fb 0%, #00aefe 18%, #0090ee 38%, #006cdc 58%, #0350c8 76%, #0440bc 100%);
}
.icons {
  display: grid;
  grid-auto-flow: column;
  grid-template-rows: repeat(7, 99px);
  grid-auto-columns: 75px;
  justify-content: start;
  padding-top: 7px;
}
.shortcut {
  padding-right: 1px;
  color: #fff;
  text-align: center;
  line-height: 15px;
  text-shadow: 0 1px 2px rgba(0, 0, 0, .5);
  white-space: nowrap;
}
.pic { display: block; position: relative; width: 48px; margin: 0 auto 3px; }
.badge { position: absolute; left: 0; bottom: 1px; width: 12px; height: 12px; }

/* Explorer window */
.explorer {
  position: absolute;
  left: 128px;
  top: 75px;
  right: 109px;
  bottom: 62px;
  display: flex;
  flex-direction: column;
  background: #fff;
  box-shadow: 0 0 0 1px rgba(20, 70, 120, .4);
}
.head { display: flex; height: 54px; flex: none; border-bottom: 1px solid #dadbdc; }
.head-left { display: flex; flex-direction: column; width: 229px; }
.quick { display: flex; align-items: center; height: 30px; padding-left: 9px; gap: 6px; }
.quick .bar { width: 1px; height: 12px; background: #8c8c8c; }
.quick .first { margin-left: 4px; }
.qat-more { border-top: 1px solid #111; padding-top: 2px; margin-right: 4px; }
.tabs { display: flex; height: 24px; }
.tab { height: 24px; }
.file { width: 56px; background: #0063b1; color: #fff; }
.home { width: 58px; background: #f5f6f7; border: 1px solid #dadbdc; border-bottom: 0; }
.share { width: 59px; }
.view { width: 54px; }
.manage { display: flex; flex-direction: column; width: 119px; padding-top: 3px; text-align: center; }
.manage span { height: 27px; line-height: 27px; background: #e8cafc; color: #3c2a4c; }
.manage button { height: 23px; border: solid #e8cafc; border-width: 0 1px; }
.head h1 { flex: 1; padding-left: 13px; line-height: 30px; color: #999; }
.winctl { display: flex; height: 28px; }
.winctl button { width: 46px; }
.help { display: flex; justify-content: flex-end; align-items: center; height: 26px; gap: 10px; padding-right: 3px; color: #999; }
.help .q { width: 16px; height: 16px; border-radius: 50%; background: #0a62b8; color: #fff; font-weight: bold; }

.ribbon { display: flex; flex: none; height: 92px; padding: 4px 0 1px; background: #f5f6f7; border-bottom: 1px solid #dadbdc; }
.group { display: flex; flex-direction: column; flex: none; border-right: 1px solid #dcdfe3; }
.items { display: flex; align-items: flex-start; flex: 1; }
.gname { line-height: 18px; text-align: center; color: #444; }
.clip .items { padding-left: 4px; }
.org .items, .open .items { padding-left: 3px; }
.sel .items { padding-left: 5px; }
.big { display: block; line-height: 13px; padding-top: 3px; text-align: center; }
.big svg { margin: 0 auto 3px; }
.off { color: #777; }
.smalls { display: flex; flex-direction: column; padding-left: 2px; }
.smalls button { height: 22px; gap: 3px; justify-content: flex-start; }
.clip { width: 263px; }
.pinb { width: 70px; }
.copyb { width: 38px; }
.pasteb { width: 46px; }
.org { width: 191px; }
.moveb { width: 43px; }
.vline { width: 1px; height: 78px; margin: 3px 3px 0; background: #dcdfe3; }
.delb { width: 42px; }
.renb { width: 47px; }
.new { width: 145px; }
.newb { width: 48px; }
.open { width: 133px; }
.propb { width: 59px; }
.sel { width: 115px; }

.addressrow { display: flex; align-items: center; flex: none; height: 34px; padding-right: 12px; }
.arrows { display: flex; align-items: center; padding-left: 12px; gap: 16px; color: #888; width: 106px; }
.arrows .recent { margin-left: -4px; }
.arrows .up { margin-left: -6px; }
.address { display: flex; align-items: center; flex: 1; height: 22px; border: 1px solid #d9d9d9; padding-left: 3px; gap: 5px; color: #666; }
.address a { color: #111; padding: 0 2px 0 1px; }
.address .prev { margin-right: -3px; }
.address .refresh { width: 18px; height: 20px; border-left: 1px solid #d9d9d9; }
.address .grow { min-width: 0; }
.search { display: flex; align-items: center; width: 202px; height: 22px; margin-left: 12px; border: 1px solid #d9d9d9; padding: 0 8px; color: #666; }
.search input { flex: 1; }
.search input::placeholder { color: #767676; }

.panes { display: flex; flex: 1; min-height: 0; }
.tree { width: 140px; padding-top: 1px; overflow: hidden; }
.tree a { display: flex; align-items: center; gap: 5px; height: 24px; padding-left: 32px; white-space: nowrap; }
.tree .l1 { padding-left: 40px; }
.tree .l2 { padding-left: 48px; }
.tree .hid svg { opacity: .5; }
.tree .cur, .files .cur { background: #d9d9d9; }
.scroll { display: flex; flex-direction: column; width: 16px; background: #f0f0f0; color: #505050; }
.scroll button { height: 17px; }
.thumb { background: #cdcdcd; }
.nav-scroll .before { flex: 161; }
.nav-scroll .thumb { flex: 103; }
.nav-scroll .after { flex: 89; }
.file-scroll .before { flex: 231; }
.file-scroll .thumb { flex: 55; }
.file-scroll .after { flex: 67; }
.files { flex: 1; overflow: hidden; padding: 1px 0 0 18px; }
.files table { border-collapse: collapse; width: 574px; table-layout: fixed; }
.files th { position: relative; height: 25px; padding: 0 3px; text-align: left; font-weight: normal; color: #4c607a; }
.files .size { width: 77px; padding-left: 6px; border-left: 1px solid #e5e5e5; }
.files .size::after { content: ""; position: absolute; top: 0; right: -4px; width: 1px; height: 25px; background: #e5e5e5; }
.files td { height: 21px; padding: 0 4px; white-space: nowrap; }
.files td svg { display: inline-block; vertical-align: middle; margin: -3px 4px 0 0; }
.files td:last-child { text-align: right; color: #6d6d6d; }
.status { display: flex; align-items: center; flex: none; height: 23px; padding: 0 4px 0 14px; color: #1e395b; }
.status .count { margin-right: 21px; }
.status .kb { margin-left: 7px; }
.mode { width: 22px; height: 22px; }
.mode.on { background: #cce8ff; border: 1px solid #5a9fd0; }

/* Properties dialog */
.dialog {
  position: absolute;
  left: 425px;
  top: 192px;
  width: 363px;
  border: 1px solid #555;
  background: #f0f0f0;
  box-shadow: 0 2px 10px rgba(0, 0, 0, .25);
  font-family: Roboto, "Liberation Sans", sans-serif;
  color: #000;
}
.dialog header { display: flex; align-items: center; gap: 6px; height: 31px; padding: 0 9px; background: #fff; font-family: "Open Sans", "Noto Sans", sans-serif; }
.dialog h2 { flex: 1; }
.ptabs { display: flex; align-items: flex-end; height: 28px; padding: 0 8px; }
.ptabs button { height: 18px; border: 1px solid #d9d9d9; border-bottom: 0; border-left: 0; }
.ptabs .hot { background: #d8e6f5; }
.ptabs .t-gen { width: 49px; }
.ptabs .t-com { width: 70px; }
.ptabs .t-sec { width: 50px; }
.ptabs .t-det { width: 42px; }
.ptabs .active { width: 101px; height: 21px; background: #fff; }
.page { margin: 0 8px 0 6px; padding: 14px 13px 16px 15px; background: #fff; border: 1px solid #dcdcdc; border-top: 0; }
.intro { display: flex; gap: 28px; min-height: 60px; }
.clock { width: 32px; height: 32px; }
.intro p { line-height: 13px; white-space: nowrap; }
.flabel { line-height: 16px; margin-bottom: 8px; }
.versions { height: 282px; border: 1px solid #555; font-family: "Open Sans", "Noto Sans", sans-serif; color: #6d6d6d; }
.vhead { display: flex; height: 26px; line-height: 26px; color: #4c607a; }
.vhead span { border-right: 1px solid #e5e5e5; position: relative; }
.vhead .c1 { width: 80px; padding-left: 17px; }
.vhead .c2 { width: 131px; padding-left: 6px; }
.sort { position: absolute; left: 61px; top: 1px; width: 8px; height: 4px; }
.versions p { padding-top: 14px; text-align: center; }
.vactions { display: flex; justify-content: flex-end; gap: 10px; padding: 9px 1px 0 0; }
.split { width: 73px; height: 21px; background: #ccc; color: #888; }
.split span { flex: 1; line-height: 17px; border-right: 1px solid #fff; }
.split .caret { margin: 0 2px; border-width: 5px 5px 0; }
.dialog footer { display: flex; justify-content: flex-end; gap: 8px; padding: 8px 7px; }
.dialog footer button { width: 73px; height: 21px; border: 1px solid #adadad; background: #e1e1e1; }
.dialog footer .ok { border: 2px solid #0078d7; }
.dialog footer button:disabled { border-color: #bfbfbf; background: #ccc; color: #888; }

.watermark {
  position: absolute;
  right: 49px;
  bottom: 8px;
  display: flex;
  align-items: center;
  gap: 6px;
  height: 62px;
  font: 34px/62px "Liberation Sans Narrow", "Roboto Condensed", Roboto, sans-serif;
  color: rgba(170, 200, 245, .65);
  pointer-events: none;
}
.watermark svg { width: 56px; height: 62px; }

/* Taskbar */
.taskbar { display: flex; align-items: stretch; flex: none; height: 40px; background: linear-gradient(90deg, #001722, #00141f 50%, #000a1e); color: #fff; }
.start { width: 48px; }
.tsearch { display: flex; align-items: center; width: 288px; padding: 0 4px 0 11px; gap: 11px; background: #f0f0f0; }
.tsearch input { flex: 1; font-size: 14px; }
.tsearch input::placeholder { color: #333; }
.hats { width: 72px; height: 36px; }
.app { width: 48px; }
.app.wide { width: 52px; padding-left: 2px; }
.app.active { background: #34474f; border-bottom: 2px solid #76b9ed; }
.tray { display: flex; align-items: center; }
.tray button { width: 24px; }
.time { display: block; width: 64px; line-height: 17px; text-align: center; }
.notify { width: 40px; margin-right: 8px; }
.peek { width: 5px; border-left: 1px solid #4a5666; }
```
